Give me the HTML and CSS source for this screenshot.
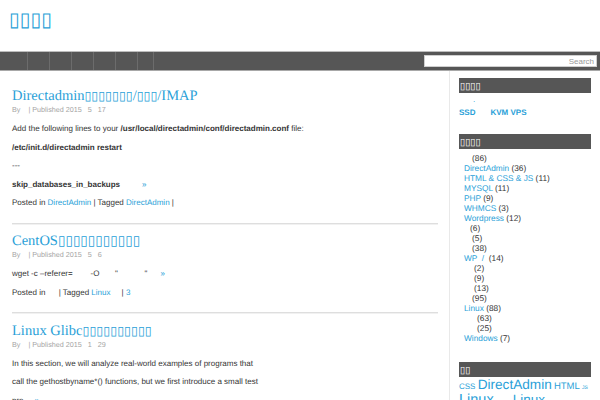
FILE: index.html
```html
<!DOCTYPE html>
<html>
<head>
<meta charset="utf-8">
<link rel="stylesheet" href="styles.css">
</head>
<body>
<header class="masthead">
  <a class="site-title" href="#"><span class="tofu">▯▯▯▯</span></a>
</header>
<nav class="navbar">
  <div class="menu">
    <a href="#"></a><a href="#"></a><a href="#"></a><a href="#"></a><a href="#"></a><a href="#"></a><a href="#"></a>
  </div>
  <input class="search" type="text" placeholder="Search">
</nav>
<div class="page">
  <main class="content">
    <article class="post">
      <h2 class="post-title"><a href="#">Directadmin<span class="tofu">▯▯▯▯▯▯▯</span>/<span class="tofu">▯▯▯</span>/IMAP</a></h2>
      <div class="meta">By &nbsp;&nbsp; | Published 2015 &nbsp; 5 &nbsp; 17</div>
      <p>Add the following lines to your <b>/usr/local/directadmin/conf/directadmin.conf</b> file:</p>
      <p><b>/etc/init.d/directadmin restart</b></p>
      <p>---</p>
      <p><b>skip_databases_in_backups</b><a class="more" href="#">»</a></p>
      <p>Posted in <a href="#">DirectAdmin</a> | Tagged <a href="#">DirectAdmin</a> |</p>
    </article>
    <article class="post">
      <h2 class="post-title"><a href="#">CentOS<span class="tofu t3">▯▯▯▯▯▯▯▯▯▯▯</span></a></h2>
      <div class="meta">By &nbsp;&nbsp; | Published 2015 &nbsp; 5 &nbsp; 6</div>
      <p class="pre">wget -c –referer=        -O       "            "      <a href="#">»</a></p>
      <p class="pre">Posted in      | Tagged <a href="#">Linux</a>     | <a href="#">3</a></p>
    </article>
    <article class="post">
      <h2 class="post-title"><a href="#">Linux Glibc<span class="tofu t2">▯▯▯▯▯▯▯▯▯▯</span></a></h2>
      <div class="meta">By &nbsp;&nbsp; | Published 2015 &nbsp; 1 &nbsp; 29</div>
      <p>In this section, we will analyze real-world examples of programs that<br>call the gethostbyname*() functions, but we first introduce a small test<br>pro &nbsp;&nbsp;&nbsp; <a href="#">»</a></p>
    </article>
  </main>
  <aside class="sidebar">
    <section class="widget">
      <h3 class="widget-title"><span class="tofu">▯▯▯▯</span></h3>
      <div class="dot-line"><a href="#">.</a></div>
      <div class="hosts"><a href="#">SSD</a><a href="#">KVM VPS</a></div>
    </section>
    <section class="widget">
      <h3 class="widget-title"><span class="tofu">▯▯▯▯</span></h3>
      <ul class="cats">
        <li class="i2">(86)</li>
        <li><a href="#">DirectAdmin</a> (36)</li>
        <li><a href="#">HTML &amp; CSS &amp; JS</a> (11)</li>
        <li><a href="#">MYSQL</a> (11)</li>
        <li><a href="#">PHP</a> (9)</li>
        <li><a href="#">WHMCS</a> (3)</li>
        <li><a href="#">Wordpress</a> (12)</li>
        <li class="i1">(6)</li>
        <li class="i2">(5)</li>
        <li class="i2">(38)</li>
        <li><a href="#">WP &nbsp;/</a> &nbsp;(14)</li>
        <li class="i3">(2)</li>
        <li class="i3">(9)</li>
        <li class="i3">(13)</li>
        <li class="i2">(95)</li>
        <li><a href="#">Linux</a> (88)</li>
        <li class="i4">(63)</li>
        <li class="i4">(25)</li>
        <li><a href="#">Windows</a> (7)</li>
      </ul>
    </section>
    <section class="widget">
      <h3 class="widget-title"><span class="tofu">▯▯</span></h3>
      <div class="cloud">
        <a class="s1" href="#">CSS</a> <a class="s4" href="#">DirectAdmin</a> <a class="s2" href="#">HTML</a> <a class="s0" href="#">JS</a><br>
        <a class="s5" href="#">Linux</a><a class="s3 gap" href="#">Linux</a>
      </div>
    </section>
  </aside>
</div>
</body>
</html>
```
FILE: styles.css
```css
html, body {
  margin: 0;
  padding: 0;
  background: #fff;
}
body {
  font-family: "Liberation Sans", Arial, sans-serif;
  font-size: 8px;
  color: #333;
  width: 600px;
  height: 400px;
  overflow: hidden;
  text-rendering: geometricPrecision;
}
a {
  color: #2a9fd8;
  text-decoration: none;
}
.tofu {
  font-family: "DejaVu Sans", sans-serif;
  font-weight: normal;
}
.masthead {
  height: 51px;
  box-sizing: border-box;
  padding: 9px 0 0 9px;
}
.site-title {
  font-size: 19.5px;
  line-height: 22px;
  color: #2a9fd8;
}
.navbar {
  height: 18px;
  background: #565656;
  border-top: 1px solid #bdbdbd;
  border-bottom: 1px solid #a8a8a8;
  display: flex;
  align-items: center;
  justify-content: space-between;
}
.menu {
  display: flex;
  height: 18px;
}
.menu a {
  width: 21px;
  height: 18px;
  border-right: 1px solid #6c6c6c;
}
.menu a:first-child {
  width: 27px;
}
.menu a:last-child {
  width: 15px;
}
.search {
  width: 173px;
  height: 12px;
  box-sizing: border-box;
  margin: 0 3px 0 0;
  padding: 0 2px;
  border: 1px solid #cfcfcf;
  background: #fff;
  font-family: "Liberation Sans", Arial, sans-serif;
  font-size: 8px;
  text-align: right;
  outline: none;
}
.search::placeholder {
  color: #999;
}
.page {
  display: flex;
}
.content {
  width: 450px;
  box-sizing: border-box;
  padding: 16px 11px 0 12px;
  border-right: 1px solid #e9e9e9;
}
.post {
  border-bottom: 1px solid #dedede;
  box-shadow: 0 1px 0 #f1f1f1;
  padding-bottom: 10px;
  margin-bottom: 8.5px;
}
.post-title {
  margin: 0;
  font-family: "Liberation Serif", "Times New Roman", serif;
  font-weight: normal;
  font-size: 14.5px;
  line-height: 18px;
}
.post-title .tofu {
  font-size: 12.5px;
}
.post-title .tofu.t2 {
  font-size: 12.6px;
}
.post-title .tofu.t3 {
  font-size: 13.6px;
}
.meta {
  font-size: 7.2px;
  line-height: 10px;
  color: #a5a5a5;
  margin-bottom: 5px;
}
.post p {
  margin: 0;
  line-height: 18.5px;
}
.post p.pre {
  white-space: pre;
}
.more {
  margin-left: 22px;
}
.sidebar {
  width: 150px;
  box-sizing: border-box;
  padding: 7px 9px 0 9px;
}
.widget-title {
  margin: 0;
  height: 15px;
  background: #565656;
  color: #fff;
  font-size: 9.4px;
  line-height: 15px;
  padding-left: 1px;
}
.dot-line {
  height: 12px;
  line-height: 8px;
  padding-left: 14px;
  font-size: 8px;
  margin-top: 3px;
}
.hosts {
  height: 10px;
  line-height: 10px;
  font-size: 8px;
  font-weight: bold;
  margin-bottom: 16px;
}
.hosts a + a {
  margin-left: 15px;
}
.cats {
  list-style: none;
  margin: 4px 0 19px 0;
  padding: 0 0 0 5px;
}
.cats li {
  line-height: 10px;
  height: 10px;
  font-size: 8.3px;
}
.cats .i1 { padding-left: 6px; }
.cats .i2 { padding-left: 8px; }
.cats .i3 { padding-left: 10px; }
.cats .i4 { padding-left: 13px; }
.cloud {
  line-height: 11px;
  padding-top: 2px;
}
.cloud .s0 { font-size: 5px; }
.cloud .s1 { font-size: 8px; }
.cloud .s2 { font-size: 9.5px; }
.cloud .s3 { font-size: 13.5px; }
.cloud .s4 { font-size: 13.6px; }
.cloud .s5 { font-size: 14.5px; }
.cloud .gap { margin-left: 19px; }
```
